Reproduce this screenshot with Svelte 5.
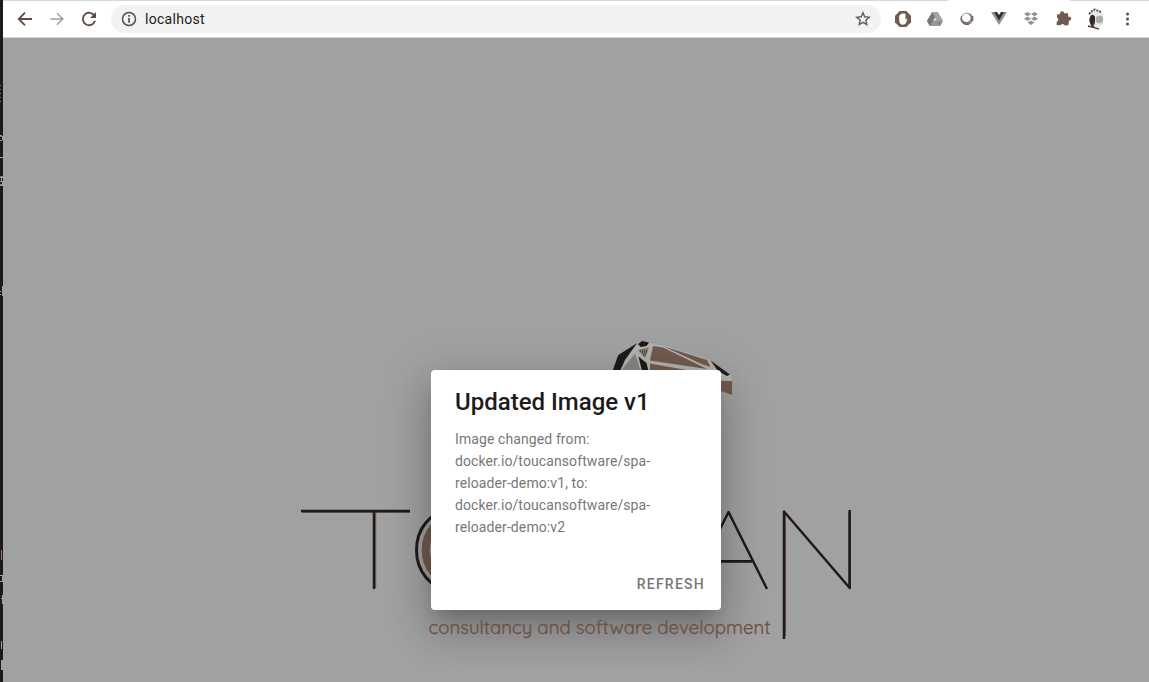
<script>
  const lines = [
    'Image changed from:',
    'docker.io/toucansoftware/spa-',
    'reloader-demo:v1, to:',
    'docker.io/toucansoftware/spa-',
    'reloader-demo:v2'
  ];
</script>

<div class="screen">
  <div class="edge">
    <svg width="3" height="682" viewBox="0 0 3 682" fill="none" stroke="#a7a09b" shape-rendering="crispEdges">
      <path d="M0 85.500h1M0 89.500h1M0 93.500h1M0 97.500h1M0 101.500h1" stroke="#777" />
      <path d="M0 135.500h2M2.500 136v4M0 140.500h2M0 157.500h3M0 177.500h3M1.500 178v4M0 181.500h2M2.500 181v4M0 185.500h3M2.500 286v10M0 291.500h1M0 294.500h1" />
      <path d="M0 136.500h2M0 176.500h3M0 184.500h2M1.500 550v10" stroke="#9c7764" />
      <path d="M0 575.500h3M0 581.500h3M2.500 576v5M2.500 595v9M1 598.500h2M1.500 641v8M1.500 660v10M2.500 660v10" />
    </svg>
  </div>
  <div class="browser">
    <header class="toolbar">
      <nav class="nav">
        <svg width="20" height="20" viewBox="0 0 20 20" fill="none" stroke="#5b4c46" stroke-width="1.800"><path d="M17 10H4M10 3.700 3.800 10l6.200 6.300" /></svg>
        <svg width="20" height="20" viewBox="0 0 20 20" fill="none" stroke="#a0a09e" stroke-width="1.400"><path d="M3.500 10h12M10 4.200l5.900 5.800-5.900 5.800" /></svg>
        <svg width="20" height="20" viewBox="0 0 20 20" fill="none" stroke="#5b4c46" stroke-width="1.900"><path d="M15.600 7.200A6.200 6.200 0 1 0 16 11.800" /><path d="M17 3v6h-6z" fill="#5b4c46" stroke="none" /></svg>
      </nav>
      <div class="address">
        <svg width="16" height="16" viewBox="0 0 16 16"><circle cx="8" cy="8" r="6.500" fill="none" stroke="#5b4c46" stroke-width="1.500" /><path d="M7.200 7h1.700v4.800H7.200zM7.200 4h1.700v1.700H7.200z" fill="#5b4c46" /></svg>
        <span>localhost</span>
        <svg class="star" width="16" height="16" viewBox="0 0 16 16" fill="none" stroke="#655c58" stroke-width="1.400"><path d="M8 1.700l1.700 4.100 4.500.4-3.400 3 1 4.400L8 11.300l-3.800 2.300 1-4.400-3.400-3 4.500-.4z" /></svg>
      </div>
      <div class="extensions">
        <svg width="20" height="20" viewBox="0 0 20 20"><path d="M6.700 2h6.600L18 6.700v6.600L13.300 18H6.700L2 13.300V6.700z" fill="#735a4e" /><path d="M6.200 11V6.500q.8-.9 1.500-.4V5q.8-1 1.600-.3.800-1 1.600.1.900-.7 1.600.4v5.900l1-1.200q.9-.2.800.6L13 14q-1 1.700-3.100 1.700-3.700 0-3.700-4.700z" fill="#fff" /></svg>
        <svg width="20" height="20" viewBox="0 0 20 20"><path d="M7.300 3h5.400l5.300 9-2.800 5H4.800L2 12z" fill="#999" /><path d="M7.300 3 10 7.600 4.800 17 2 12z" fill="#777" /><path d="M7.300 3h5.400l5.300 9h-5.200z" fill="#a5a5a3" /><path d="M10 8.500l1.600 3H8.300z" fill="#ddd" /><path d="M12 14h5M13 11.500l2.500 4.500M16 11.500 13.500 16" stroke="#777" stroke-dasharray="1 1" /></svg>
        <svg width="20" height="20" viewBox="0 0 20 20"><circle cx="10" cy="9.800" r="6" fill="#777371" /><circle cx="9.300" cy="8.800" r="4.300" fill="#fff" /><path d="M4.500 7A6 6 0 0 0 12 15.300M15.800 7v5" fill="none" stroke="#70564a" stroke-width="1" /><path d="M14 9.500v4h-4q3-1 4-4z" fill="#999" /></svg>
        <svg width="20" height="20" viewBox="0 0 20 20"><path d="M2 3h4l4 7 4-7h4l-8 13z" fill="#92928f" /><path d="M5 3h3l2 3 2-3h3l-5 8.500z" fill="#352c29" /></svg>
        <svg width="20" height="20" viewBox="0 0 20 20" fill="#929290"><path d="M3 5l3.500-2L10 5 6.500 7.200zM10 5l3.500-2L17 5l-3.500 2.200zM3 9.800l3.500-2.200L10 9.800 6.500 12zM10 9.800l3.500-2.200L17 9.800 13.500 12zM6.500 13.600l3.500-2 3.500 2-3.500 2.400z" /></svg>
        <svg width="20" height="20" viewBox="0 0 20 20" fill="#715b51"><path d="M4 5.500 7.300 5a2 2 0 1 1 3.800-.7l4-.1.200 3.700a2 2 0 1 1 .7 3.800l-.6 4.500-3.800.3a2 2 0 0 0-3.800-.2L3.500 16l.3-3.500a2 2 0 0 0 .2-3.800z" /></svg>
        <svg class="avatar" width="22" height="24" viewBox="0 0 22 24"><path d="M5 6Q9 2 14 3.500l5 4v10l-6 4-6-3z" fill="#e6e6e4" /><path d="M5 7q3-3.500 6-4.500l6 2.500" fill="none" stroke="#555" stroke-width="2" stroke-dasharray="2 1" /><path d="M6 10q2-4 5-.5v7l-2.500 4Q4 15 6 10z" fill="#30251f" /><circle cx="15.500" cy="12.500" r="3.700" fill="#aaa" /><path d="M4 19l6 1.700 5 1.500M8 17l2 4" fill="none" stroke="#423a35" stroke-width="1.400" /><path d="M9.300 18l1.300-3" stroke="#886c5d" /></svg>
        <svg width="20" height="20" viewBox="0 0 20 20" fill="#5b4c46"><circle cx="10.500" cy="5" r="1.500" /><circle cx="10.500" cy="10" r="1.500" /><circle cx="10.500" cy="15" r="1.500" /></svg>
      </div>
    </header>
    <main class="page">
      <svg class="brand" width="1146" height="644" viewBox="3 38 1146 644">
        <path d="M612 371l6-16 19-12.500 5-1.500 12 3 12 2 42 13 23 16 1 6-13-1-11-8z" fill="#b1b1ae" />
        <path d="M612.500 371l5.700-16 19-12-12.200 17-5 11zM638 344l4-3 7 1.500-2.500 3.500-6 1zM638.500 356.500l8 6.500 2 8h-6.500zM710.500 360.500l19.500 14-3 1.500-9-5z" fill="#1e1b1a" />
        <path d="M621 371l14-17.500 5.500 17.500z" fill="#868684" />
        <path d="M653 346l10 1.500 44 21.500-57-8.500zM664 346.500l43 13.500 3.500 7-9-3zM650 363.500l42 7.500h-42zM721 381h11v14l-11-4z" fill="#735a4e" />
        <path d="M638 350l11-2.500-4 10.500z" fill="#777" />
        <path d="M640 351h8M642 353h6M643 355h3" stroke="#302b29" stroke-dasharray="1 1" />
        <ellipse cx="449" cy="550" rx="32.500" ry="39" fill="#a0a09e" stroke="#1f1b19" stroke-width="3" />
        <ellipse cx="451" cy="550" rx="30" ry="35" fill="#735a4e" stroke="#aaa9a6" stroke-width="1" />
        <path d="M432 539q-5 10 0 22z" fill="#999" />
        <g fill="none" stroke="#775b4c" stroke-width="1">
          <path d="M302 512.500h108M375.700 512v76M720 562.500h32M785.500 512v124M848.500 512v74" />
        </g>
        <g fill="none" stroke="#1f1b19" stroke-width="2.500" stroke-linejoin="round">
          <path d="M301 511h109M374 511v78M690 589l38.500-77L767 589M703 561.300h49" />
          <path d="M784 639V511.500L849.700 588V510" />
        </g>
      </svg>
      <section class="dialog" role="dialog" aria-labelledby="title">
        <h1 id="title">Updated Image v1</h1>
        <p>{#each lines as line}<span>{line}</span>{/each}</p>
        <button>REFRESH</button>
      </section>
      <svg class="tagline" width="346" height="26" viewBox="427 616 346 26">
        <text x="428.500" y="633.500" textLength="342" lengthAdjust="spacingAndGlyphs">consultancy and software development</text>
      </svg>
    </main>
  </div>
</div>

<style>
  :global(body) { margin: 0; overflow: hidden; }
  .screen { display: flex; width: 1149px; height: 682px; overflow: hidden; font-family: Roboto, sans-serif; }
  .edge { width: 3px; background: #1c1a1a; }
  .edge svg, .brand, .tagline { display: block; }
  .browser { width: 1146px; display: flex; flex-direction: column; }
  .toolbar {
    box-sizing: border-box; height: 38px; padding: 1px 11px 0 12px; display: flex; align-items: center;
    border-bottom: 1px solid #d5d5d3;
    background: linear-gradient(90deg, #d7d7d6 0 945px, #fff 945px 1067px, #d7d7d6 1067px) top / 100% 1px no-repeat #fff;
  }
  .nav { display: flex; gap: 12px; width: 96px; }
  .nav svg, .extensions svg { flex: none; }
  .address { box-sizing: border-box; width: 770px; height: 28px; border-radius: 14px; background: #f1f3f3; display: flex; align-items: center; padding: 0 10px; gap: 8px; color: #1d1b1a; font-size: 14px; letter-spacing: .28px; }
  .star { margin-left: auto; }
  .extensions { flex: 1; display: flex; align-items: center; padding-left: 12px; gap: 12px; }
  .extensions .avatar { margin: 0 -1px; }
  .page { height: 644px; display: grid; grid-template-columns: 1146px; grid-template-rows: 644px; background: #a1a1a1; overflow: hidden; }
  .brand, .dialog, .tagline { grid-area: 1 / 1; }
  .dialog {
    box-sizing: border-box; justify-self: center; margin-top: 332px; width: 290px; height: 240px; padding: 16px 16px 10px 24px;
    display: flex; flex-direction: column; border-radius: 4px; background: #fff;
    box-shadow: 0 11px 15px -7px #0003, 0 24px 38px 3px #00000024, 0 9px 46px 8px #0000001f;
  }
  h1 { margin: 0; font-size: 24px; line-height: 32px; font-weight: 500; color: #1d1b1a; }
  p { margin: 10px 0 0; font-size: 14px; line-height: 22px; color: #777; letter-spacing: .1px; white-space: nowrap; }
  p span { display: block; }
  button { margin: auto 0 0; align-self: flex-end; height: 32px; padding: 0; border: 0; background: none; font: 500 14px/32px Roboto, sans-serif; color: #777; letter-spacing: 1.25px; }
  .tagline { margin: 578px 0 0 424px; }
  .tagline text { font: 400 18px Quicksand, Lato, sans-serif; fill: #6d5144; stroke: #6d5144; stroke-width: .3px; }
</style>
